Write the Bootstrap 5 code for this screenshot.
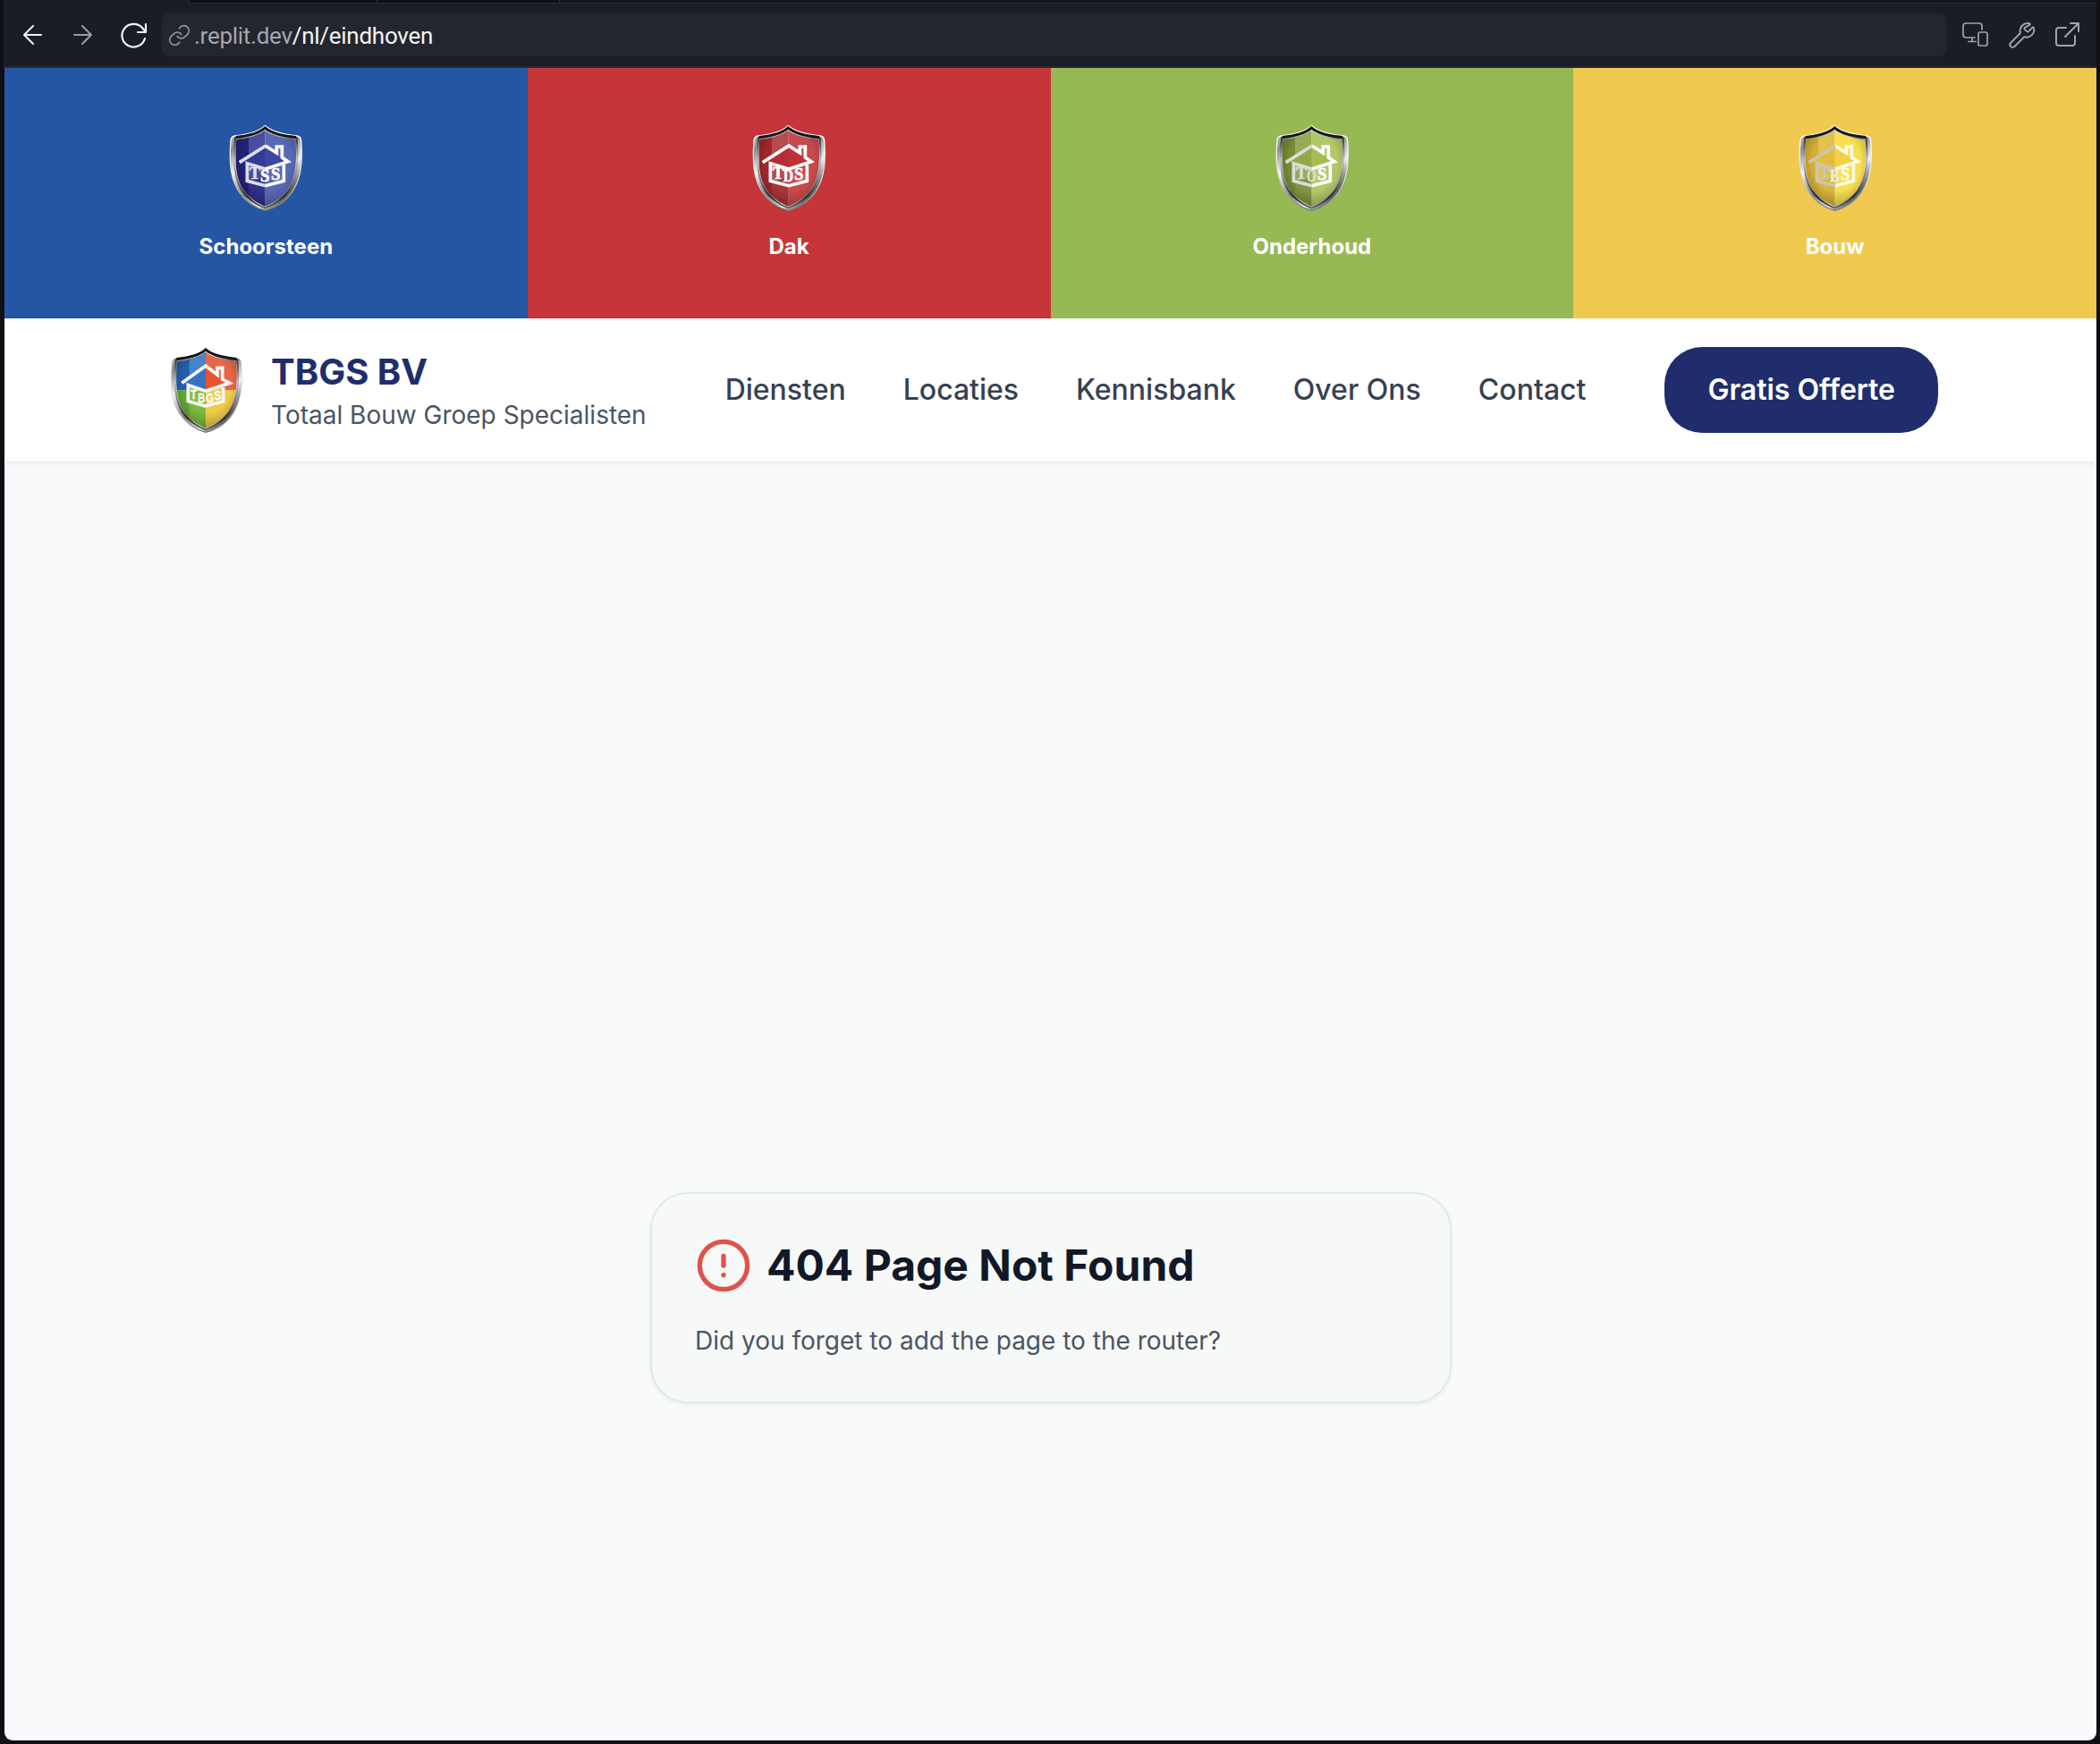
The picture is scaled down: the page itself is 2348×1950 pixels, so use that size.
<!DOCTYPE html>
<html lang="nl">
<head>
<meta charset="utf-8">
<meta name="viewport" content="width=device-width, initial-scale=1">
<title>TBGS BV</title>
<link href="https://cdn.jsdelivr.net/npm/bootstrap@5.3.0/dist/css/bootstrap.min.css" rel="stylesheet">
<style>
body{font-family:Inter,sans-serif;background:#0f1014;height:1950px;overflow:hidden}
.window{height:1950px;padding:0 4px 4px 5px}
.toolbar{height:76px;background:#1a1d25;border-bottom:2px solid #262932;flex:none;margin-left:-1px}
.tabstrip{height:4px;margin-left:207px;background:#161720;border-bottom:1px solid #2a2c36;border-left:1px solid #2a2c36}
.tabstrip i{display:block;width:210px;background:#0f0f18;border-right:1px solid #2a2c36}
.tabstrip i+i{width:204px}
.tools{height:70px;padding:0 18px 0 17px}
.tools svg{flex:none;fill:none;stroke-linecap:round;stroke-linejoin:round}
.address{height:48px;background:#23262e;border-radius:8px;margin-left:14px;padding:1px 0 0 7px;font:400 26px Roboto,sans-serif;color:#a3a7ae;letter-spacing:-.27px}
.address b{font-weight:400;color:#f3f4f6}
.t-device{margin-left:17px}
.t-wrench{margin-left:18px}
.t-open{margin-left:19px}
.viewport{height:1870px;background:#f9fafc;border-radius:0 0 9px 9px;overflow:hidden}
.band{height:280px;padding-top:64px;font-weight:700;font-size:24px;line-height:32px;color:#fff}
.band svg,.brand svg{width:96px;height:96px;display:block;flex:none}
.band span{margin-top:24px}
.initials{font:700 56px "Liberation Serif",serif;stroke-width:2}
.b-blue{background:#2456a3;--l:#222276;--m:#484da0;--r:#5869b4;--roof1:#303b94;--roof2:#3c489f;--ink1:#dcdde8;--ink2:#fff}
.b-red{background:#c53539;--l:#a1272d;--m:#b84b4f;--r:#c84a4d;--roof1:#b92c33;--roof2:#bf3138;--ink1:#fff;--ink2:#fff}
.b-green{background:#97b954;--l:#758b35;--m:#98a957;--r:#b1c868;--roof1:#94a84a;--roof2:#a2bd51;--ink1:#dadcd4;--ink2:#fff}
.b-yellow{background:#f1c94f;--l:#d5ad32;--m:#e2c14e;--r:#f7df50;--roof1:#e4bd3b;--roof2:#f3d145;--ink1:#cbc6b2;--ink2:#fffbe8}
.ink1{stroke:var(--ink1)}
.ink2{stroke:var(--ink2)}
.fill1{fill:var(--ink1);stroke:var(--ink1)}
.fill2{fill:var(--ink2);stroke:var(--ink2)}
.site{height:160px;background:#fff;padding:0 177px 0 178px;box-shadow:0 2px 4px rgba(0,0,0,.07);position:relative;z-index:1;flex:none}
.brand .name{font-size:40px;line-height:48px;font-weight:700;color:#202d6c;padding-top:4px}
.brand .tag{font-size:28px;line-height:40px;color:#4b5563;margin-top:4px}
.menu{gap:64px}
.menu a{font-size:32px;line-height:48px;font-weight:500;color:#374151;text-decoration:none}
.offer{height:96px;padding:0 48px;border-radius:42px;background:#202d6c;color:#fff;font-size:32px;font-weight:600}
.missing{height:1870px;padding-left:1px}
.notice{width:896px;height:236px;border:2px solid #e3e8eb;border-radius:42px;background:#f7f9f8;padding:48px;box-shadow:0 2px 4px rgba(0,0,0,.06)}
.notice h1{font-size:48px;line-height:64px;font-weight:700;color:#111827;margin:0}
.notice p{font-size:28px;line-height:40px;color:#4b5563;margin:32px 0 0}
</style>
<script src="https://cdn.jsdelivr.net/npm/bootstrap@5.3.0/dist/js/bootstrap.bundle.min.js"></script>
</head>
<body>
<svg width="0" height="0" class="position-absolute">
<defs>
<linearGradient id="steel" x1="0" y1="0" x2="1" y2="1">
<stop offset="0" stop-color="#e8e8e8"/><stop offset=".15" stop-color="#8a8a8a"/><stop offset=".3" stop-color="#f4f4f4"/><stop offset=".5" stop-color="#777"/><stop offset=".68" stop-color="#f2f2f2"/><stop offset=".82" stop-color="#555"/><stop offset="1" stop-color="#ccc"/>
</linearGradient>
<linearGradient id="edge" x1="0" y1="0" x2="0" y2="1">
<stop offset="0" stop-color="#fff"/><stop offset=".6" stop-color="#e4e4e4"/><stop offset="1" stop-color="#777"/>
</linearGradient>
<linearGradient id="rim" x1="0" y1="0" x2="0" y2="1">
<stop offset="0" stop-color="#111"/><stop offset=".16" stop-color="#444"/><stop offset=".4" stop-color="#bbb"/><stop offset=".65" stop-color="#777"/><stop offset=".85" stop-color="#222"/><stop offset="1" stop-color="#666"/>
</linearGradient>
<radialGradient id="shade" cx=".5" cy=".42" r=".6">
<stop offset=".6" stop-color="#000" stop-opacity="0"/><stop offset="1" stop-color="#000" stop-opacity=".3"/>
</radialGradient>
<clipPath id="field"><path d="M170 47Q142 70 74 79C68 160 72 208 98 246C118 275 145 291 170 302C196 291 224 275 245 246C271 208 278 160 272 79Q198 70 170 47Z"/></clipPath>
<g id="shell">
<path d="M170 31Q148 57 68 66Q56 68 55 82C49 160 55 212 83 254C106 288 140 308 170 316C202 308 238 288 261 254C289 212 297 160 291 82Q290 68 278 66Q196 57 170 31Z" fill="url(#steel)" stroke="url(#edge)" stroke-width="4"/>
<path d="M170 40Q144 64 70 73C63 160 68 210 93 249C114 280 143 297 170 308C198 297 228 280 250 249C275 210 283 160 276 73Q196 64 170 40Z" fill="none" stroke="url(#rim)" stroke-width="6"/>
<path d="M72 70Q146 62 170 38Q196 62 274 70" fill="none" stroke="#161616" stroke-width="8"/>
</g>
</defs>
</svg>

<div class="window d-flex flex-column">
  <div class="toolbar">
    <div class="tabstrip d-flex"><i></i><i></i></div>
    <div class="tools d-flex align-items-center">
      <svg width="32" height="32" viewBox="0 0 32 32" stroke="#f0f1f3" stroke-width="2"><path d="M25 16H6M16 6L6 16L16 26"/></svg>
      <svg class="ms-4" width="32" height="32" viewBox="0 0 32 32" stroke="#9a9da4" stroke-width="2"><path d="M6 16H25M15 6L25 16L15 26"/></svg>
      <svg class="ms-4" width="34" height="34" viewBox="0 0 34 34" stroke="#f0f1f3" stroke-width="2.2"><path d="M30 5V14H21M30 14L26 9A13 12.8 0 1 0 29 21"/></svg>
      <div class="address flex-grow-1 d-flex align-items-center">
        <svg class="me-1" width="25" height="25" viewBox="1 1 22 22" stroke="#8c9098" stroke-width="1.6"><path d="M10 13a5 5 0 0 0 7.5.5l3-3a5 5 0 0 0-7-7L12 5.200M14 11a5 5 0 0 0-7.5-.5l-3 3a5 5 0 0 0 7 7l1.700-1.700"/></svg>
        <span>.replit.dev<b>/nl/eindhoven</b></span>
      </div>
      <svg class="t-device" width="32" height="30" viewBox="0 0 32 30" stroke="#9fa3aa" stroke-width="1.700"><path d="M15 18H5Q2 18 2 15V5Q2 2 5 2H20Q23 2 23 5V9M12 18V22M8 22.500H16"/><rect x="19" y="12" width="10" height="15" rx="2"/></svg>
      <svg class="t-wrench" width="34" height="34" viewBox="0 0 24 24" stroke="#9fa3aa" stroke-width="1.350"><path d="M14.700 6.300a1 1 0 0 0 0 1.400l1.600 1.600a1 1 0 0 0 1.400 0l3.100-3.100c.4-.4 1-.3 1.100.3a6 6 0 0 1-7.600 7.100l-7.600 7.600a2.100 2.100 0 0 1-3-3l7.600-7.600a6 6 0 0 1 7.100-7.600c.6.200.7.700.3 1.100z"/></svg>
      <svg class="t-open" width="30" height="30" viewBox="0 0 30 30" stroke="#9fa3aa" stroke-width="2"><path d="M14 7H6Q3 7 3 10V24Q3 27 6 27H21Q24 27 24 24V16M13 17L28 2M19 2H28V11"/></svg>
    </div>
  </div>

  <div class="viewport d-flex flex-column">
    <div class="row g-0 flex-shrink-0">
      <div class="col-3 band b-blue d-flex flex-column align-items-center">
        <svg viewBox="28 30 288 288"><use href="#shell"/>
          <g clip-path="url(#field)"><path d="M60 40h55v270H60z" fill="var(--l)"/><path d="M115 40h55v270h-55z" fill="var(--m)"/><path d="M170 40h120v270H170z" fill="var(--r)"/><path d="M60 240Q110 215 170 205V310H60z" fill="var(--l)" opacity=".6"/><path d="M60 40h230v270H60z" fill="url(#shade)"/></g>
          <path d="M100 152L172 103V178L107 158z" fill="var(--roof1)"/><path d="M170 103L246 153L170 178z" fill="var(--roof2)"/>
          <path class="ink2" d="M171 99L209 123V102H227V138L247 152L171 177M171 233L233 217V163" fill="none" stroke-width="11"/>
          <path class="ink1" d="M84 155L172 99M172 177L110 158V217L172 233" fill="none" stroke-width="11"/>
          <g class="initials"><text class="fill1" x="117" y="211">T</text><text class="fill2" x="154" y="220">S</text><text class="fill2" x="190" y="213">S</text></g>
        </svg><span>Schoorsteen</span>
      </div>
      <div class="col-3 band b-red d-flex flex-column align-items-center">
        <svg viewBox="28 30 288 288"><use href="#shell"/>
          <g clip-path="url(#field)"><path d="M60 40h55v270H60z" fill="var(--l)"/><path d="M115 40h55v270h-55z" fill="var(--m)"/><path d="M170 40h120v270H170z" fill="var(--r)"/><path d="M60 240Q110 215 170 205V310H60z" fill="var(--l)" opacity=".6"/><path d="M60 40h230v270H60z" fill="url(#shade)"/></g>
          <path d="M100 152L172 103V178L107 158z" fill="var(--roof1)"/><path d="M170 103L246 153L170 178z" fill="var(--roof2)"/>
          <path class="ink2" d="M84 155L172 99L209 123V102H227V138L247 152L172 177L110 158V217L172 233L233 217V163" fill="none" stroke-width="11"/>
          <g class="initials"><text class="fill1" x="117" y="211">T</text><text class="fill2" x="153" y="220" textLength="34" lengthAdjust="spacingAndGlyphs">D</text><text class="fill2" x="190" y="213">S</text></g>
        </svg><span>Dak</span>
      </div>
      <div class="col-3 band b-green d-flex flex-column align-items-center">
        <svg viewBox="28 30 288 288"><use href="#shell"/>
          <g clip-path="url(#field)"><path d="M60 40h55v270H60z" fill="var(--l)"/><path d="M115 40h55v270h-55z" fill="var(--m)"/><path d="M170 40h120v270H170z" fill="var(--r)"/><path d="M60 240Q110 215 170 205V310H60z" fill="var(--l)" opacity=".6"/><path d="M60 40h230v270H60z" fill="url(#shade)"/></g>
          <path d="M100 152L172 103V178L107 158z" fill="var(--roof1)"/><path d="M170 103L246 153L170 178z" fill="var(--roof2)"/>
          <path class="ink2" d="M171 99L209 123V102H227V138L247 152L171 177M171 233L233 217V163" fill="none" stroke-width="11"/>
          <path class="ink1" d="M84 155L172 99M172 177L110 158V217L172 233" fill="none" stroke-width="11"/>
          <g class="initials"><text class="fill1" x="117" y="211">T</text><text class="fill1" x="154" y="220" textLength="33" lengthAdjust="spacingAndGlyphs">O</text><text class="fill2" x="190" y="213">S</text></g>
        </svg><span>Onderhoud</span>
      </div>
      <div class="col-3 band b-yellow d-flex flex-column align-items-center">
        <svg viewBox="28 30 288 288"><use href="#shell"/>
          <g clip-path="url(#field)"><path d="M60 40h55v270H60z" fill="var(--l)"/><path d="M115 40h55v270h-55z" fill="var(--m)"/><path d="M170 40h120v270H170z" fill="var(--r)"/><path d="M60 240Q110 215 170 205V310H60z" fill="var(--l)" opacity=".6"/><path d="M60 40h230v270H60z" fill="url(#shade)"/></g>
          <path d="M100 152L172 103V178L107 158z" fill="var(--roof1)"/><path d="M170 103L246 153L170 178z" fill="var(--roof2)"/>
          <path class="ink2" d="M171 99L209 123V102H227V138L247 152L171 177M171 233L233 217V163" fill="none" stroke-width="11"/>
          <path class="ink1" d="M84 155L172 99M172 177L110 158V217L172 233" fill="none" stroke-width="11"/>
          <g class="initials"><text class="fill1" x="117" y="211">T</text><text x="154" y="220" fill="#f0ebd0" stroke="#f0ebd0" textLength="33" lengthAdjust="spacingAndGlyphs">B</text><text class="fill2" x="190" y="213">S</text></g>
        </svg><span>Bouw</span>
      </div>
    </div>

    <header class="site d-flex align-items-center justify-content-between">
      <div class="brand d-flex align-items-center gap-4">
        <svg viewBox="29 30 288 288"><use href="#shell"/>
          <g clip-path="url(#field)"><path d="M60 40h110v135H60z" fill="#245fac"/><path d="M115 40h55v135h-55z" fill="#4683ca"/><path d="M170 40h120v135H170z" fill="#e86648"/><path d="M60 175h110v140H60z" fill="#62a832"/><path d="M115 175h55v140h-55z" fill="#79b941"/><path d="M170 175h120v140H170z" fill="#eecb46"/><path d="M60 40h230v270H60z" fill="url(#shade)"/></g>
          <path d="M96 152L170 103V171L107 158z" fill="#3671c4"/><path d="M170 103L246 150L170 171z" fill="#ea5331"/>
          <path d="M114 164L170 184V221L114 207z" fill="#8cbf42"/><path d="M170 184L225 164V207L170 221z" fill="#edcc4d"/>
          <path d="M90 151L170 93L209 123V100H226V138L250 151L170 178L111 158V212L170 228L229 212V166" fill="none" stroke="#f8f8f8" stroke-width="11"/>
          <g fill="#fff" stroke="#fff" font-family="Liberation Sans,sans-serif" font-weight="700" font-size="46"><text x="119" y="205" textLength="21" lengthAdjust="spacingAndGlyphs">T</text><text x="144" y="215" textLength="24" lengthAdjust="spacingAndGlyphs">B</text><text x="171" y="215" textLength="26" lengthAdjust="spacingAndGlyphs">G</text><text x="198" y="206" textLength="24" lengthAdjust="spacingAndGlyphs">S</text></g>
        </svg>
        <div><div class="name">TBGS BV</div><div class="tag">Totaal Bouw Groep Specialisten</div></div>
      </div>
      <nav class="menu d-flex">
        <a href="#">Diensten</a><a href="#">Locaties</a><a href="#">Kennisbank</a><a href="#">Over Ons</a><a href="#">Contact</a>
      </nav>
      <a href="#" class="offer d-flex align-items-center text-decoration-none">Gratis Offerte</a>
    </header>

    <main class="missing d-flex flex-shrink-0 align-items-center justify-content-center">
      <section class="notice">
        <div class="d-flex align-items-center gap-3">
          <svg width="64" height="64" viewBox="0 0 24 24" fill="none" stroke="#df524d" stroke-width="2" stroke-linecap="round"><circle cx="12" cy="12" r="10"/><path d="M12 8v4M12 16h.01"/></svg>
          <h1>404 Page Not Found</h1>
        </div>
        <p>Did you forget to add the page to the router?</p>
      </section>
    </main>
  </div>
</div>
</body>
</html>
